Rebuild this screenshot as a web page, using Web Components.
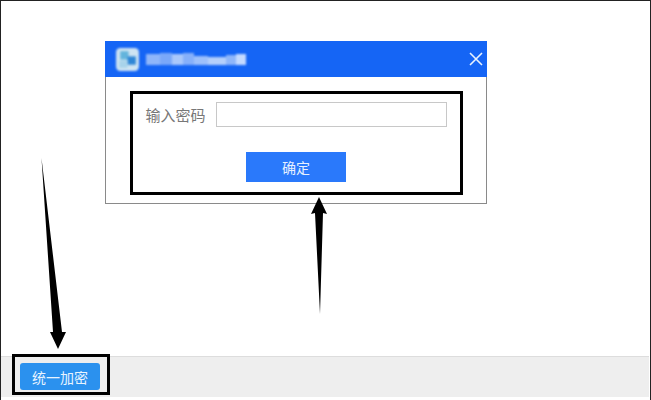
<!DOCTYPE html>
<html>
<head>
<meta charset="utf-8">
<style>
  html, body { margin: 0; padding: 0; background: #fff; }
  body { font-family: "Liberation Sans", "Noto Sans CJK SC", sans-serif; }
</style>
</head>
<body>
<app-frame>
  <pwd-dialog slot="canvas"></pwd-dialog>
  <call-out slot="canvas" style="left:129px;top:90px;width:333px;height:104px"></call-out>
  <call-out slot="canvas" style="left:11px;top:353px;width:98px;height:41px"></call-out>
  <mark-arrow slot="canvas" points="41.5,158 53,332 50,332 58,349 66,332 62,332"></mark-arrow>
  <mark-arrow slot="canvas" points="320,314 315,213 311,214 319,197 327,214 323,213"></mark-arrow>
  <app-btn slot="footer">统一加密</app-btn>
</app-frame>

<script>
class AppFrame extends HTMLElement {
  constructor() {
    super();
    this.attachShadow({ mode: "open" });
    this.shadowRoot.innerHTML = `
      <style>
        :host {
          display: flex;
          flex-direction: column;
          position: relative;
          box-sizing: border-box;
          width: 651px;
          height: 400px;
          overflow: hidden;
          background: #fff;
          border: 1px solid #222;
          border-bottom: 0;
        }
        .main { flex: 1; }
        footer {
          height: 41px;
          margin: 0 1px 3px 0;
          box-sizing: border-box;
          border-top: 1px solid #ddd;
          background: #eeeeee;
          display: flex;
          align-items: center;
          padding: 0 0 1px 19px;
        }
      </style>
      <div class="main"></div>
      <footer><slot name="footer"></slot></footer>
      <slot name="canvas"></slot>
    `;
  }
}

class AppBtn extends HTMLElement {
  constructor() {
    super();
    this.attachShadow({ mode: "open" });
    this.shadowRoot.innerHTML = `
      <style>
        :host {
          display: flex;
          align-items: center;
          justify-content: center;
          width: 80px;
          height: 27px;
          border-radius: 3px;
          background: #2b91ee;
          color: #e8f4ff;
          font: 14px "Noto Sans CJK SC", sans-serif;
        }
      </style>
      <slot></slot>
    `;
  }
}

class PwdDialog extends HTMLElement {
  constructor() {
    super();
    this.attachShadow({ mode: "open" });
    this.shadowRoot.innerHTML = `
      <style>
        :host {
          position: absolute;
          left: 104px;
          top: 40px;
          width: 382px;
          height: 163px;
          box-sizing: border-box;
          display: flex;
          flex-direction: column;
          border: 1px solid #8a8a8a;
          background: #fff;
          font: 14px "Noto Sans CJK SC", sans-serif;
        }
        header {
          height: 36px;
          margin: -1px -1px 0;
          background: #1565f5;
          display: flex;
          align-items: center;
          padding: 0 10px;
          gap: 5px;
        }
        .logo { width: 25px; height: 25px; flex: none; filter: blur(1.2px); }
        /* the title is pixelated out in the reference, so no text here */
        .title { flex: 1; height: 16px; }
        .title svg { display: block; filter: blur(1px); }
        .close { width: 14px; height: 14px; flex: none; margin-right: -6px; }
        .body {
          flex: 1;
          display: flex;
          flex-direction: column;
          align-items: center;
          padding-top: 25px;
        }
        .row { display: flex; align-items: center; gap: 10px; color: #777; font-size: 15px; }
        .input {
          width: 229px;
          height: 23px;
          border: 1px solid #c8c8c8;
        }
        .ok {
          margin-top: 25px;
          width: 100px;
          height: 30px;
          display: flex;
          align-items: center;
          justify-content: center;
          background: #2a79fb;
          color: #e6f0ff;
        }
      </style>
      <header>
        <svg class="logo" viewBox="0 0 24 24">
          <rect x="1" y="1" width="22" height="22" rx="4" fill="#cfe4f2"/>
          <rect x="5" y="4" width="8" height="8" fill="#63b4dc"/>
          <rect x="12" y="9" width="8" height="8" fill="#2f86d6"/>
          <rect x="4" y="13" width="8" height="7" fill="#a8d3ea"/>
        </svg>
        <div class="title">
          <svg width="102" height="16">
            <rect x="1" y="3" width="14" height="11" fill="#8fb6fa"/>
            <rect x="15" y="2" width="12" height="12" fill="#7aa8f9"/>
            <rect x="27" y="3" width="11" height="11" fill="#a9c8fb"/>
            <rect x="38" y="2" width="11" height="12" fill="#86b0fa"/>
            <rect x="49" y="5" width="14" height="9" fill="#9dc0fb"/>
            <rect x="63" y="6" width="18" height="8" fill="#b4cffb"/>
            <rect x="81" y="4" width="10" height="10" fill="#8fb6fa"/>
            <rect x="91" y="3" width="10" height="11" fill="#c4daff"/>
          </svg>
        </div>
        <svg class="close" viewBox="0 0 14 14" fill="none" stroke="#e8f2ff" stroke-width="1.6">
          <path d="M1 1 L13 13 M13 1 L1 13"/>
        </svg>
      </header>
      <div class="body">
        <div class="row"><span>输入密码</span><div class="input"></div></div>
        <div class="ok">确定</div>
      </div>
    `;
  }
}

// black rectangle drawn over the screenshot
class CallOut extends HTMLElement {
  constructor() {
    super();
    this.attachShadow({ mode: "open" });
    this.shadowRoot.innerHTML = `
      <style>
        :host {
          position: absolute;
          box-sizing: border-box;
          border: 3px solid #000;
          pointer-events: none;
        }
      </style>
    `;
  }
}

class MarkArrow extends HTMLElement {
  constructor() {
    super();
    this.attachShadow({ mode: "open" });
    this.shadowRoot.innerHTML = `
      <style>
        :host { position: absolute; left: -1px; top: -1px; width: 651px; height: 400px; pointer-events: none; }
        svg { display: block; }
      </style>
      <svg width="651" height="400"><polygon fill="#000" points="${this.getAttribute("points")}"/></svg>
    `;
  }
}

customElements.define("app-frame", AppFrame);
customElements.define("app-btn", AppBtn);
customElements.define("pwd-dialog", PwdDialog);
customElements.define("call-out", CallOut);
customElements.define("mark-arrow", MarkArrow);
</script>
</body>
</html>
